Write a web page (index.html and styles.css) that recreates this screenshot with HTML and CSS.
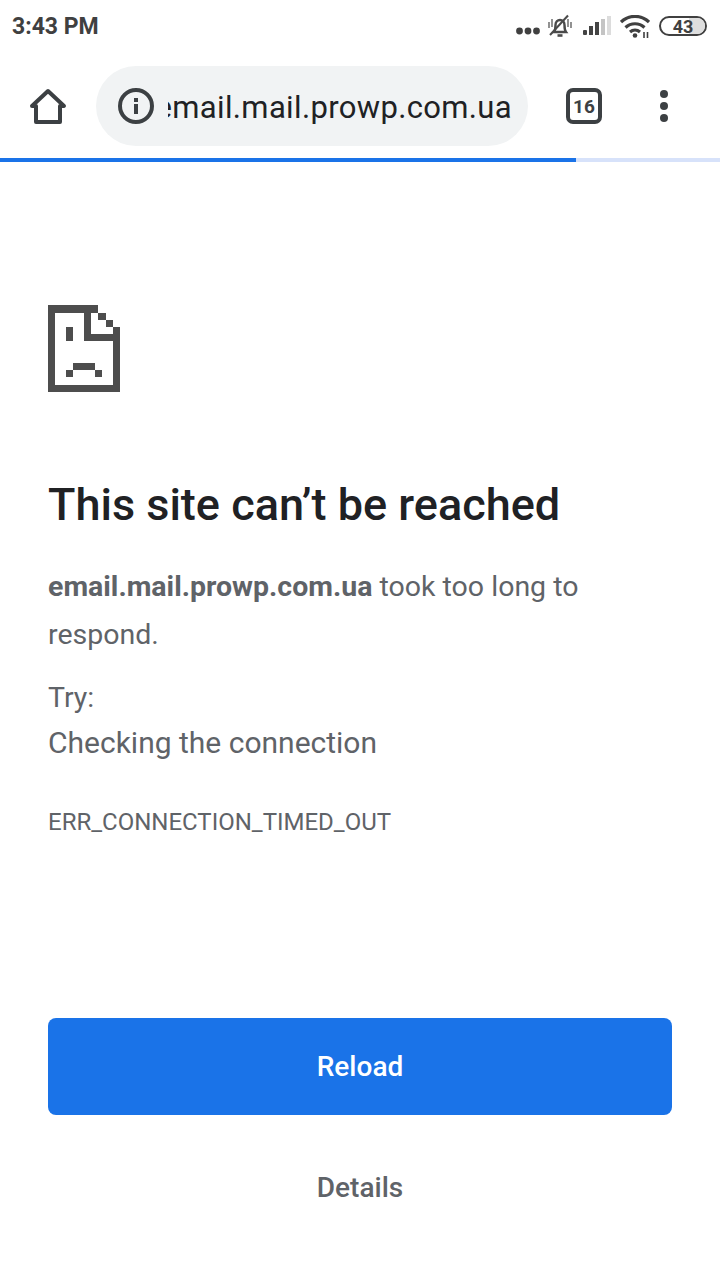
FILE: index.html
```html
<!DOCTYPE html>
<html lang="en">
<head>
  <meta charset="UTF-8">
  <title>This site can't be reached</title>
  <link rel="stylesheet" href="styles.css">
</head>
<body>
  <div class="status-bar">
    <span class="time">3:43 PM</span>
    <div class="status-icons">
      <svg class="dots" width="24" height="8" viewBox="0 0 24 8"><circle cx="3.500" cy="4" r="3.400"/><circle cx="12" cy="4" r="3.400"/><circle cx="20.500" cy="4" r="3.400"/></svg>
      <svg class="bell" width="26" height="24" viewBox="0 0 26 24" fill="none" stroke="#4a4a4a" stroke-width="2.400">
        <path d="M7 18c1.500-2 1.500-4 1.500-7 0-3 2-5 4.500-5s4.500 2 4.500 5c0 3 0 5 1.500 7z"/>
        <path d="M10.500 21.500h5" stroke-width="2.600"/>
        <path d="M3 21L21 1.500" stroke-width="2"/>
        <path d="M2 8v6M5 5v8M21 5v8M24 8v6" stroke-width="1.600" stroke="#777"/>
      </svg>
      <svg class="signal" width="28" height="19" viewBox="0 0 28 19">
        <rect x="0" y="14" width="4" height="5" rx="1" fill="#444"/>
        <rect x="6" y="10" width="4" height="9" fill="#444"/>
        <rect x="12" y="6" width="4" height="13" fill="#444"/>
        <rect x="18" y="3" width="4" height="16" fill="#c4c4c4"/>
        <rect x="24" y="0" width="4" height="19" fill="#dcdcdc"/>
      </svg>
      <svg class="wifi" width="30" height="23" viewBox="0 0 30 23" fill="none" stroke="#404040" stroke-width="3.200">
        <path d="M1 7c8-7.500 20-7.500 28 0"/>
        <path d="M5.500 12.500c5.500-5 13.500-5 19 0"/>
        <path d="M10 17c3-2.500 7-2.500 10 0"/>
        <circle cx="15" cy="20.500" r="2.300" fill="#404040" stroke="none"/>
        <path d="M24 17v6M27.500 17v6" stroke-width="1.600"/>
      </svg>
      <div class="battery">
        <div class="battery-fill"></div>
        <span class="battery-text">43</span>
      </div>
    </div>
  </div>

  <div class="toolbar">
    <svg class="home-icon" width="40" height="40" viewBox="0 0 40 40" fill="none" stroke="#3c4043" stroke-width="4" stroke-linejoin="round">
      <path d="M4 20L20 5l16 15h-4v16H8V20z"/>
    </svg>
    <div class="omnibox">
      <svg class="info-icon" width="36" height="36" viewBox="0 0 36 36" fill="none">
        <circle cx="18" cy="18" r="16" stroke="#3c4043" stroke-width="4"/>
        <rect x="16" y="16" width="4" height="10" fill="#3c4043"/>
        <rect x="16" y="10" width="4" height="4" fill="#3c4043"/>
      </svg>
      <div class="url-clip"><span class="url">email.mail.prowp.com.ua</span></div>
    </div>
    <div class="tabs-btn"><span>16</span></div>
    <div class="menu-btn"><i></i><i></i><i></i></div>
  </div>
  <div class="progress"><div class="progress-done"></div></div>

  <div class="content">
    <svg class="sad-tab" width="72" height="87" viewBox="0 0 20 24" shape-rendering="crispEdges" fill="#4d4d4d">
      <rect x="0" y="0" width="14" height="2"/>
      <rect x="0" y="0" width="2" height="24"/>
      <rect x="0" y="22" width="20" height="2"/>
      <rect x="18" y="6" width="2" height="18"/>
      <rect x="10" y="0" width="2" height="10"/>
      <rect x="10" y="8" width="10" height="2"/>
      <rect x="14" y="2" width="2" height="2"/>
      <rect x="16" y="4" width="2" height="2"/>
      <rect x="5" y="6" width="2" height="4"/>
      <rect x="7" y="16" width="6" height="2"/>
      <rect x="5" y="18" width="2" height="2"/>
      <rect x="13" y="18" width="2" height="2"/>
    </svg>
    <h1>This site can’t be reached</h1>
    <p class="summary"><strong>email.mail.prowp.com.ua</strong> took too long to respond.</p>
    <p class="try">Try:</p>
    <p class="suggestion">Checking the connection</p>
    <p class="error-code">ERR_CONNECTION_TIMED_OUT</p>
  </div>

  <div class="actions">
    <div class="reload-btn">Reload</div>
    <div class="details-btn">Details</div>
  </div>
</body>
</html>
```

FILE: styles.css
```css
* {
  box-sizing: border-box;
}

html, body {
  height: 1280px;
}

body {
  margin: 0;
  background-color: #ffffff;
  font-family: Roboto, "Liberation Sans", sans-serif;
  overflow: hidden;
}

.status-bar {
  height: 52px;
  padding: 0 12px;
  display: flex;
  align-items: center;
  justify-content: space-between;
}

.time {
  font-size: 23px;
  font-weight: 700;
  color: #404040;
}

.status-icons {
  display: flex;
  align-items: center;
  gap: 9px;
}

.dots {
  fill: #404040;
  margin-top: 9px;
}

.bell {
  margin-left: -2px;
}

.signal {
  margin-left: 1px;
  margin-top: -2px;
}

.battery {
  position: relative;
  width: 48px;
  height: 20px;
  border: 2px solid #404040;
  border-radius: 10px;
  margin-right: 1px;
  overflow: hidden;
  display: flex;
  align-items: center;
  justify-content: center;
}

.battery-fill {
  position: absolute;
  right: 0;
  top: 0;
  bottom: 0;
  width: 16px;
  background-color: #dedede;
}

.battery-text {
  position: relative;
  font-size: 18px;
  font-weight: 700;
  color: #404040;
}

.toolbar {
  height: 106px;
  display: flex;
  align-items: center;
  padding-top: 2px;
}

.home-icon {
  margin-left: 28px;
  flex-shrink: 0;
}

.omnibox {
  margin-left: 28px;
  width: 432px;
  height: 80px;
  border-radius: 40px;
  background-color: #f1f3f4;
  display: flex;
  align-items: center;
  padding-left: 22px;
  padding-right: 16px;
  flex-shrink: 0;
}

.info-icon {
  flex-shrink: 0;
}

.url-clip {
  margin-left: 14px;
  width: 344px;
  padding-top: 2px;
  overflow: hidden;
  display: flex;
  justify-content: flex-end;
  white-space: nowrap;
}

.url {
  font-size: 31px;
  color: #202124;
  letter-spacing: 0.35px;
}

.tabs-btn {
  margin-left: 38px;
  width: 36px;
  height: 36px;
  border: 4px solid #3c4043;
  border-radius: 7px;
  display: flex;
  align-items: center;
  justify-content: center;
  font-size: 19px;
  font-weight: 700;
  color: #3c4043;
  flex-shrink: 0;
}

.menu-btn {
  margin-left: 58px;
  display: flex;
  flex-direction: column;
  gap: 4px;
}

.menu-btn i {
  display: block;
  width: 8px;
  height: 8px;
  border-radius: 50%;
  background-color: #3c4043;
}

.progress {
  height: 4px;
  background-color: #d7e2fa;
}

.progress-done {
  width: 576px;
  height: 4px;
  background-color: #1a73e8;
}

.content {
  padding: 143px 48px 0;
}

.sad-tab {
  display: block;
}

h1 {
  margin: 87px 0 0;
  font-size: 45px;
  line-height: 52px;
  font-weight: 500;
  color: #202124;
}

.summary {
  margin: 32px 0 0;
  font-size: 28.500px;
  line-height: 48px;
  color: #5f6368;
}

.summary strong {
  font-weight: 700;
}

.try {
  margin: 16px 0 0;
  font-size: 28.500px;
  line-height: 46px;
  color: #5f6368;
}

.suggestion {
  margin: 0;
  font-size: 30px;
  line-height: 44px;
  color: #5f6368;
}

.error-code {
  margin: 41px 0 0;
  font-size: 24px;
  line-height: 32px;
  color: #5f6368;
}

.actions {
  position: absolute;
  left: 48px;
  right: 48px;
  top: 1018px;
}

.reload-btn {
  height: 97px;
  border-radius: 8px;
  background-color: #1a73e8;
  color: #ffffff;
  font-size: 28px;
  font-weight: 500;
  display: flex;
  align-items: center;
  justify-content: center;
}

.details-btn {
  margin-top: 49px;
  text-align: center;
  font-size: 28px;
  line-height: 48px;
  font-weight: 500;
  color: #5f6368;
}
```
